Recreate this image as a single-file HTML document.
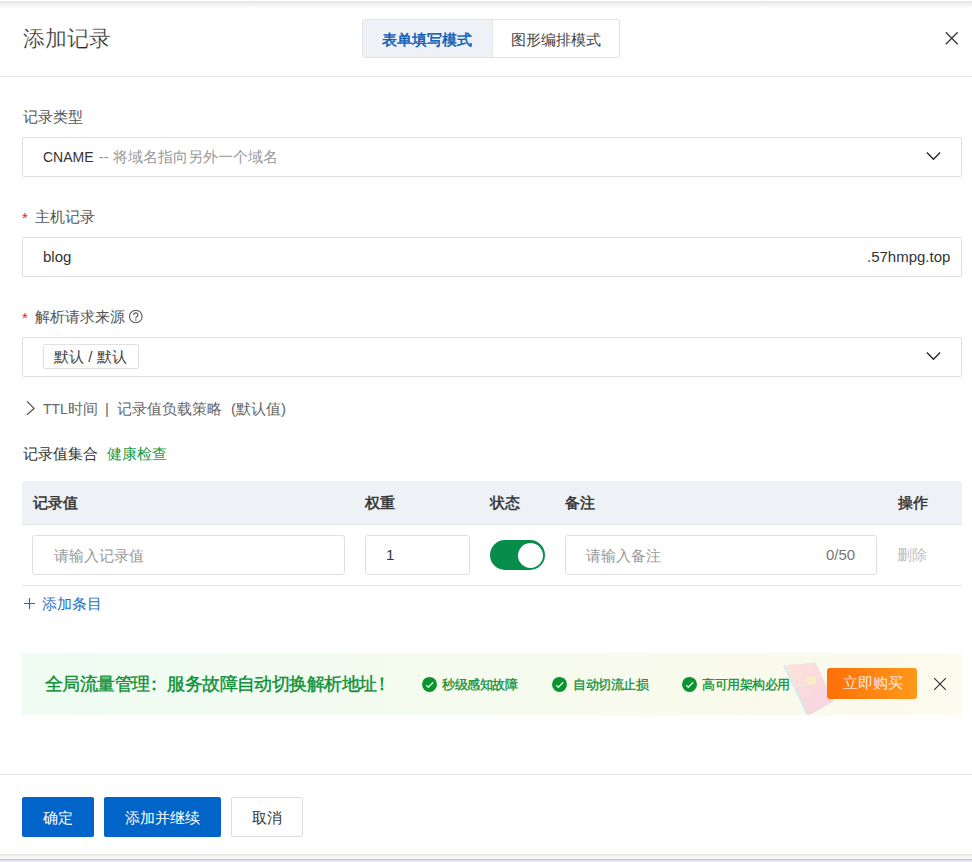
<!DOCTYPE html>
<html><head><meta charset="utf-8">
<style>
*{box-sizing:border-box;margin:0;padding:0}
html,body{width:972px;height:862px;overflow:hidden;background:#fff}
body{font-family:"Liberation Sans",sans-serif;color:#333;position:relative;font-size:15px}
.a{position:absolute;white-space:nowrap}
.t{line-height:20px;font-size:15px}
.topsh{left:0;top:0;width:972px;height:10px;background:linear-gradient(#fff 0px,#fff 1px,#e2e2e2 1px,#efefef 3px,#fafafa 7px,#fff 10px)}
.botsh{left:0;top:854px;width:972px;height:8px;background:linear-gradient(#dcdcdc 0px,#ececec 1px,#f5f5f5 3px,#fafafa 5px,#bdbdc8 5px,#c0c0cc 6px,#e6e6f6 6px,#e6e6f8 8px)}
.title{left:23px;top:24px;font-size:22px;line-height:30px;color:#2a2a2a;-webkit-text-stroke:0.3px #fff}
.tabs{left:362px;top:19px;width:258px;height:39px;border:1px solid #e3e3e3;border-radius:3px;overflow:hidden}
.tab1{position:absolute;left:0;top:0;width:130px;height:37px;background:#eef1f6;border-right:1px solid #e6e6e6}
.hdiv{left:0;top:76px;width:972px;height:1px;background:#e4e4e4}
.label{color:#555}
.req{color:#e0203a;position:relative;top:1px}
.box{left:22px;width:940px;height:40px;border:1px solid #e0e0e0;border-radius:2px;background:#fff}
.grey{color:#999}
.tag{left:43px;top:344px;width:96px;height:25px;border:1px solid #e0e0e0;border-radius:2px;background:#fff}
.th{left:22px;top:481px;width:940px;height:44px;background:#eef1f6;border-bottom:1px solid #e6e6e6;border-radius:2px 2px 0 0}
.thc{color:#333;-webkit-text-stroke:0.5px #333}
.rowline{left:22px;top:585px;width:940px;height:1px;background:#e4e4e4}
.inp{top:535px;height:40px;border:1px solid #e0e0e0;border-radius:3px;background:#fff}
.sw{left:490px;top:540px;width:55px;height:30px;border-radius:15px;background:#058d49}
.knob{position:absolute;left:28px;top:2.5px;width:25px;height:25px;border-radius:50%;background:#fff}
.banner{left:22px;top:653px;width:940px;height:62px;background:linear-gradient(90deg,#effcf3 0%,#f2fbf0 30%,#f6fbee 52%,#f9faec 75%,#fdfaee 100%);overflow:hidden}
.btn{top:797px;height:40px;border-radius:2px}
.fdiv{left:0;top:774px;width:972px;height:1px;background:#e4e4e4}
.gr{color:#1a8f3a}
</style></head><body>
<div class="a topsh"></div>
<div class="a title">添加记录</div>
<div class="a tabs"><div class="tab1"></div></div>
<div class="a t" style="left:382px;top:30px;color:#0b5bb8;-webkit-text-stroke:0.5px #0b5bb8">表单填写模式</div>
<div class="a t" style="left:511px;top:30px;color:#444">图形编排模式</div>
<svg class="a" style="left:944px;top:31px" width="16" height="16" viewBox="0 0 16 16"><path d="M1.8 1.3L13.7 13.3M13.7 1.3L1.8 13.3" stroke="#333" stroke-width="1.25" fill="none"/></svg>
<div class="a hdiv"></div>

<div class="a t label" style="left:23px;top:107px">记录类型</div>
<div class="a box" style="top:137px"></div>
<div class="a t" style="left:43px;top:147px"><span style="font-size:14px">CNAME</span> <span class="grey" style="margin-left:1px">-- 将域名指向另外一个域名</span></div>
<svg class="a" style="left:925px;top:149px" width="17" height="13" viewBox="0 0 17 13"><path d="M1.9 3.6L8.5 10.2L15.1 3.6" stroke="#262626" stroke-width="1.35" fill="none"/></svg>

<div class="a t label" style="left:22px;top:207px"><span class="req">*</span><span style="margin-left:7px">主机记录</span></div>
<div class="a box" style="top:237px"></div>
<div class="a t" style="left:43px;top:247px">blog</div>
<div class="a t" style="left:867px;top:247px">.57hmpg.top</div>

<div class="a t label" style="left:22px;top:307px"><span class="req">*</span><span style="margin-left:7px">解析请求来源</span></div>
<svg class="a" style="left:128px;top:309px" width="16" height="16" viewBox="0 0 16 16"><circle cx="7.8" cy="7.5" r="6.3" stroke="#555" stroke-width="1.1" fill="none"/><path d="M5.7 6a2.1 2.1 0 1 1 2.9 1.9c-.5.2-.8.5-.8 1v.6" stroke="#555" stroke-width="1.1" fill="none"/><circle cx="7.8" cy="10.9" r=".75" fill="#555"/></svg>
<div class="a box" style="top:337px"></div>
<div class="a tag"></div>
<div class="a t" style="left:54px;top:347px;color:#444">默认 / 默认</div>
<svg class="a" style="left:925px;top:349px" width="17" height="13" viewBox="0 0 17 13"><path d="M1.9 3.6L8.5 10.2L15.1 3.6" stroke="#262626" stroke-width="1.35" fill="none"/></svg>

<svg class="a" style="left:24px;top:401px" width="12" height="16" viewBox="0 0 12 16"><path d="M3 0.4L10 7.4L3 13.8" stroke="#555" stroke-width="1.3" fill="none"/></svg>
<div class="a t" style="left:43px;top:399px;color:#666"><span style="font-size:14px">TTL</span>时间</div>
<div class="a t" style="left:105px;top:399px;color:#666">|</div>
<div class="a t" style="left:117px;top:399px;color:#666">记录值负载策略</div>
<div class="a t" style="left:231px;top:399px;color:#666">(默认值)</div>

<div class="a t" style="left:23px;top:444px;color:#333">记录值集合</div>
<div class="a t gr" style="left:107px;top:444px;color:#1d9a4a">健康检查</div>

<div class="a th"></div>
<div class="a t thc" style="left:33px;top:493px">记录值</div>
<div class="a t thc" style="left:365px;top:493px">权重</div>
<div class="a t thc" style="left:490px;top:493px">状态</div>
<div class="a t thc" style="left:565px;top:493px">备注</div>
<div class="a t thc" style="left:898px;top:493px">操作</div>

<div class="a inp" style="left:32px;width:313px"></div>
<div class="a t" style="left:54px;top:546px;color:#999">请输入记录值</div>
<div class="a inp" style="left:365px;width:105px"></div>
<div class="a t" style="left:386px;top:545px;color:#333">1</div>
<div class="a sw"><div class="knob"></div></div>
<div class="a inp" style="left:565px;width:312px"></div>
<div class="a t" style="left:586px;top:546px;color:#999">请输入备注</div>
<div class="a t" style="left:826px;top:545px;color:#777">0/50</div>
<div class="a t" style="left:897px;top:545px;color:#c0c0c0">删除</div>
<div class="a rowline"></div>

<svg class="a" style="left:23px;top:597px" width="13" height="13" viewBox="0 0 13 13"><path d="M6.5 1V12M1 6.5H12" stroke="#1f6fc5" stroke-width="1.2" fill="none"/></svg>
<div class="a t" style="left:42px;top:594px;color:#1f6fc5">添加条目</div>

<div class="a banner">
<svg class="a" style="left:718px;top:0px" width="120" height="62" viewBox="740 653 120 62"><defs><linearGradient id="env" x1="0" y1="0" x2="1" y2="1"><stop offset="0" stop-color="#fbe3d9"/><stop offset="0.5" stop-color="#f9d6dc"/><stop offset="1" stop-color="#f3cfe6"/></linearGradient></defs>
<polygon points="785,665 815.5,662.5 834,701 808,716" fill="url(#env)" opacity=".9"/>
<path d="M784,665.5L808,716" stroke="#cfeef0" stroke-width="1.8"/>
<path d="M794,685.5L806,684.5M816,678L822,675" stroke="#f3e6d8" stroke-width="1.3"/>
<circle cx="811.5" cy="680.5" r="4.8" fill="#f7ecc4"/></svg>
</div>
<div class="a gr" style="left:45px;top:672px;font-size:18px;letter-spacing:-0.55px;line-height:24px;color:#0e9038;-webkit-text-stroke:0.4px #0e9038">全局流量管理<span style="position:relative;left:-4.5px">：</span>服务故障自动切换解析地址<span style="position:relative;left:-4px">！</span></div>
<svg class="a" style="left:421px;top:676px" width="17" height="17" viewBox="0 0 17 17"><circle cx="8.5" cy="8.4" r="7.5" fill="#0a9331"/><path d="M5.2 9.3L7.3 11.3L12.2 6.3" stroke="#d5f7dc" stroke-width="1.3" fill="none"/></svg>
<div class="a gr" style="left:442px;top:676px;font-size:13px;letter-spacing:-0.45px;line-height:18px;color:#0e9038;-webkit-text-stroke:0.3px #0e9038">秒级感知故障</div>
<svg class="a" style="left:551px;top:676px" width="17" height="17" viewBox="0 0 17 17"><circle cx="8.5" cy="8.4" r="7.5" fill="#0a9331"/><path d="M5.2 9.3L7.3 11.3L12.2 6.3" stroke="#d5f7dc" stroke-width="1.3" fill="none"/></svg>
<div class="a gr" style="left:573px;top:676px;font-size:13px;letter-spacing:-0.45px;line-height:18px;color:#0e9038;-webkit-text-stroke:0.3px #0e9038">自动切流止损</div>
<svg class="a" style="left:681px;top:676px" width="17" height="17" viewBox="0 0 17 17"><circle cx="8.5" cy="8.4" r="7.5" fill="#0a9331"/><path d="M5.2 9.3L7.3 11.3L12.2 6.3" stroke="#d5f7dc" stroke-width="1.3" fill="none"/></svg>
<div class="a gr" style="left:702px;top:676px;font-size:13px;letter-spacing:-0.45px;line-height:18px;color:#0e9038;-webkit-text-stroke:0.3px #0e9038">高可用架构必用</div>
<div class="a" style="left:827px;top:668px;width:90px;height:31px;border-radius:3px;background:linear-gradient(100deg,#ff6e08,#ff9a1a)"></div>
<div class="a" style="left:843px;top:673px;font-size:15px;line-height:20px;color:#fff;-webkit-text-stroke:0.15px #ff7d12">立即购买</div>
<svg class="a" style="left:933px;top:677px" width="14" height="14" viewBox="0 0 14 14"><path d="M1.2 1.2L12.8 12.8M12.8 1.2L1.2 12.8" stroke="#333" stroke-width="1.15" fill="none"/></svg>

<div class="a fdiv"></div>
<div class="a btn" style="left:22px;width:72px;background:#0064c8"></div>
<div class="a t" style="left:43px;top:808px;color:#fff">确定</div>
<div class="a btn" style="left:104px;width:117px;background:#0064c8"></div>
<div class="a t" style="left:125px;top:808px;color:#fff">添加并继续</div>
<div class="a btn" style="left:231px;width:72px;border:1px solid #ddd"></div>
<div class="a t" style="left:252px;top:808px;color:#333">取消</div>
<div class="a botsh"></div>
</body></html>
